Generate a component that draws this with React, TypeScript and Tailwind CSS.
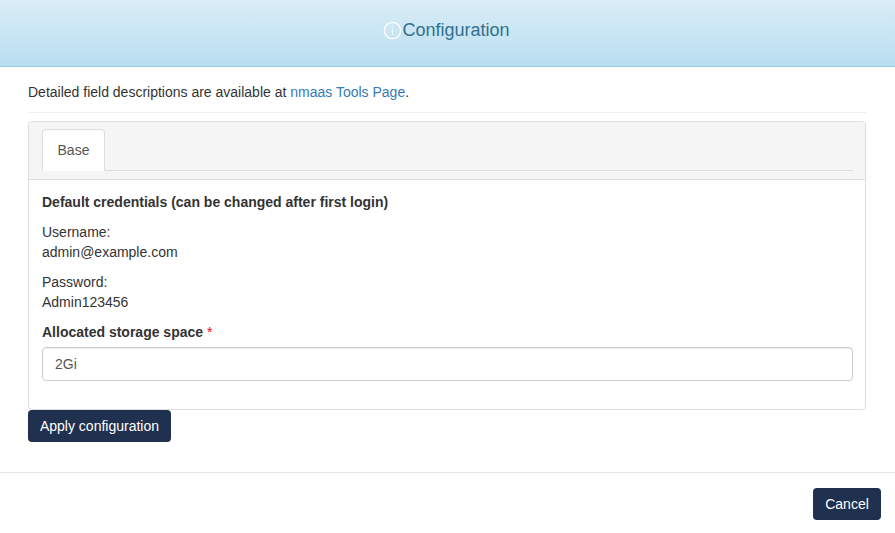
export default function App() {
  return (
    <div className="w-[895px] h-[533px] bg-white overflow-hidden font-['Liberation_Sans',Arial,sans-serif] text-[14px] leading-[20px] text-[#333333]">
      <div className="h-[67px] flex items-center justify-center pb-[6px] pr-[2px] bg-gradient-to-b from-[#d9edf7] to-[#b9def0] border-b border-[#9acfea] text-[#31708f]">
        <svg width="19" height="19" viewBox="0 0 19 19" fill="none">
          <circle cx="9.5" cy="9.5" r="8.2" stroke="#ffffff" strokeWidth="1.3" />
          <rect x="8.8" y="8" width="1.4" height="6" fill="#ffffff" fillOpacity="0.7" />
          <rect x="8.8" y="5" width="1.4" height="1.6" fill="#ffffff" fillOpacity="0.7" />
        </svg>
        <span className="text-[18px] leading-[20px]">Configuration</span>
      </div>

      <div className="pl-[28px] pr-[29px] pt-[15px]">
        <p className="pb-[10px] border-b border-[#eeeeee]">
          Detailed field descriptions are available at <a className="text-[#337ab7]">nmaas Tools Page</a>.
        </p>

        <div className="mt-[8px] h-[289px] border border-[#dddddd] rounded-[4px]">
          <div className="h-[58px] bg-[#f5f5f5] border-b border-[#dddddd] pl-[13px] pr-[12px] pt-[7px] rounded-t-[4px]">
            <div className="h-[42px] border-b border-[#dddddd]">
              <div className="w-[63px] h-[42px] flex items-center justify-center bg-white border border-[#dddddd] border-b-white rounded-t-[4px] text-[#555555]">
                Base
              </div>
            </div>
          </div>

          <div className="pl-[13px] pr-[12px] pt-[12px]">
            <p className="font-bold">Default credentials (can be changed after first login)</p>
            <p className="mt-[10px]">
              Username:
              <br />
              admin@example.com
            </p>
            <p className="mt-[10px]">
              Password:
              <br />
              Admin123456
            </p>
            <p className="mt-[10px] font-bold">
              Allocated storage space <span className="text-[#ff0000] font-normal">*</span>
            </p>
            <input
              readOnly
              value="2Gi"
              className="block mt-[5px] w-full h-[34px] px-[12px] bg-white border border-[#cccccc] rounded-[4px] text-[#555555] shadow-[inset_0_1px_1px_rgba(0,0,0,0.075)] outline-none"
            />
          </div>
        </div>

        <button className="block w-[143px] h-[32px] bg-[#20304f] text-white rounded-[4px]">Apply configuration</button>
      </div>

      <div className="mt-[30px] border-t border-[#e5e5e5] pt-[15px] pr-[14px] flex justify-end">
        <button className="w-[68px] h-[32px] bg-[#20304f] text-white rounded-[4px]">Cancel</button>
      </div>
    </div>
  );
}
